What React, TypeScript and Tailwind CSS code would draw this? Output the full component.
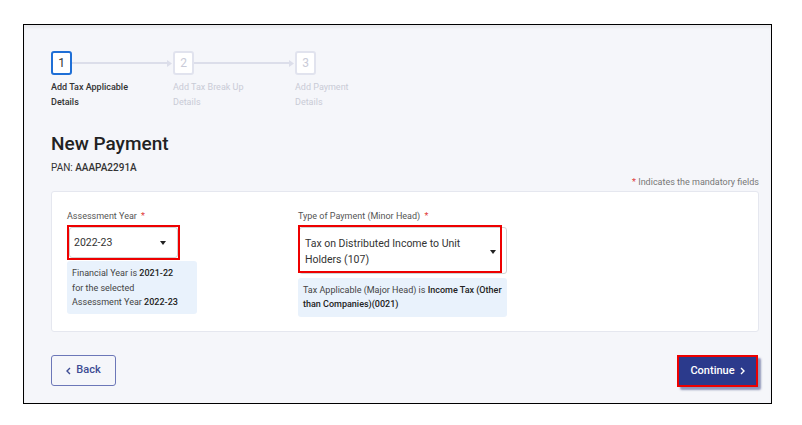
import React from 'react'

const steps = [
  { n: 1, title: 'Add Tax Applicable', sub: 'Details', active: true },
  { n: 2, title: 'Add Tax Break Up', sub: 'Details', active: false },
  { n: 3, title: 'Add Payment', sub: 'Details', active: false },
]

const Caret: React.FC = () => (
  <svg width="6" height="4" viewBox="0 0 6 4" className="shrink-0">
    <path d="M0 0 L6 0 L3 4 Z" fill="#222" />
  </svg>
)

const Stepper: React.FC = () => (
  <div className="flex">
    {steps.map((s, i) => (
      <div key={s.n} className="w-[122px]">
        <div className="flex items-center">
          <div
            className={
              s.active
                ? 'w-[21px] h-[24px] border-2 border-[#1f6fd6] rounded-[3px] bg-white flex items-center justify-center text-[12px] text-[#333]'
                : 'w-[21px] h-[24px] border-2 border-[#e1e3ee] rounded-[3px] bg-white flex items-center justify-center text-[12px] text-[#c9cbd8]'
            }
          >
            {s.n}
          </div>
          {i < steps.length - 1 && (
            <div className="flex-1 flex items-center">
              <div className="flex-1 h-[2px] bg-[#dcdeea]" />
              <svg width="5" height="7" viewBox="0 0 5 7" className="mr-[1px]">
                <path d="M0 0 L5 3.5 L0 7 Z" fill="#dcdeea" />
              </svg>
            </div>
          )}
        </div>
        <div
          className={
            s.active
              ? 'mt-[5px] text-[9px] leading-[15px] font-medium text-[#333]'
              : 'mt-[5px] text-[9px] leading-[15px] text-[#c9cbd6]'
          }
        >
          <div>{s.title}</div>
          <div>{s.sub}</div>
        </div>
      </div>
    ))}
  </div>
)

const RedMark: React.FC<{ className: string }> = ({ className }) => (
  <div className={'absolute border-2 border-[#ee0000] pointer-events-none ' + className} />
)

export default function App() {
  return (
    <div className="w-[802px] h-[425px] bg-white pt-[24px] pl-[23px]" style={{ fontFamily: 'Roboto, "Open Sans", sans-serif' }}>
      <div className="w-[749px] h-[380px] border border-black bg-[#f5f6fa] shadow-[inset_0_3px_3px_rgba(0,0,0,0.05)] pt-[26px] pl-[27px] pr-[12px]">
        <Stepper />

        <h1 className="mt-[22px] text-[19px] leading-[24px] font-medium text-[#222]">New Payment</h1>
        <div className="mt-[5px] text-[10px] leading-[14px] text-[#333]">
          PAN: <span className="font-medium">AAAPA2291A</span>
        </div>

        <div className="text-right text-[9px] leading-[14px] text-[#777]">
          <span className="text-[#e03a3a]">*</span> Indicates the mandatory fields
        </div>

        <div className="mt-[2px] h-[141px] bg-white border border-[#e5e7ef] rounded-[3px] pt-[17px] pl-[15px] flex">
          <div className="w-[231px]">
            <div className="text-[9px] leading-[14px] text-[#555]">
              Assessment Year <span className="text-[#e03a3a] ml-[2px]">*</span>
            </div>
            <div className="relative mt-[4px] ml-[2px] w-[109px]">
              <div className="h-[31px] bg-white border border-[#d2d2d2] rounded-[3px] flex items-center justify-between pl-[4px] pr-[11px] text-[10.5px] text-[#333]">
                <span>2022-23</span>
                <Caret />
              </div>
              <RedMark className="-left-[2px] -top-[2px] w-[113px] h-[35px]" />
            </div>
            <div className="mt-[3px] w-[130px] h-[53px] bg-[#e9f2fc] rounded-[3px] pt-[5px] pl-[5px] text-[9px] leading-[14.5px] text-[#444]">
              <div>
                Financial Year is <span className="font-medium text-[#222]">2021-22</span>
              </div>
              <div>for the selected</div>
              <div>
                Assessment Year <span className="font-medium text-[#222]">2022-23</span>
              </div>
            </div>
          </div>

          <div className="w-[210px]">
            <div className="text-[9px] leading-[14px] text-[#555]">
              Type of Payment (Minor Head) <span className="text-[#e03a3a] ml-[2px]">*</span>
            </div>
            <div className="relative mt-[4px] ml-[1px] w-[208px]">
              <div className="h-[47px] bg-white border border-[#d2d2d2] rounded-[3px] flex items-center justify-between pl-[5px] pr-[10px] pt-[2px] text-[10.5px] leading-[16px] text-[#333]">
                <span>
                  Tax on Distributed Income to Unit
                  <br />
                  Holders (107)
                </span>
                <Caret />
              </div>
              <RedMark className="-left-[1px] -top-[2px] w-[204px] h-[48px]" />
            </div>
            <div className="mt-[4px] w-[209px] h-[39px] bg-[#e9f2fc] rounded-[3px] pt-[5px] pl-[5px] text-[9px] leading-[14px] text-[#444] whitespace-nowrap">
              Tax Applicable (Major Head) is <span className="font-medium text-[#222]">Income Tax (Other</span>
              <br />
              <span className="font-medium text-[#222]">than Companies)(0021)</span>
            </div>
          </div>
        </div>

        <div className="mt-[23px] flex justify-between">
          <button className="w-[65px] h-[31px] border border-[#6c77b8] rounded-[3px] flex items-center justify-center gap-[5px] text-[11px] font-medium text-[#3d4c94] bg-transparent">
            <svg width="5" height="8" viewBox="0 0 5 8">
              <path d="M4 1 L1 4 L4 7" stroke="#3d4c94" strokeWidth="1.4" fill="none" />
            </svg>
            Back
          </button>
          <div className="relative mr-[1px]">
            <button className="w-[81px] h-[32px] bg-[#2b3a8c] rounded-[2px] shadow-[3px_3px_2px_rgba(60,70,130,0.55)] flex items-center justify-center gap-[5px] text-[11px] font-medium text-white">
              Continue
              <svg width="5" height="8" viewBox="0 0 5 8">
                <path d="M1 1 L4 4 L1 7" stroke="#fff" strokeWidth="1.4" fill="none" />
              </svg>
            </button>
            <RedMark className="left-0 top-0 w-[81px] h-[32px]" />
          </div>
        </div>
      </div>
    </div>
  )
}
